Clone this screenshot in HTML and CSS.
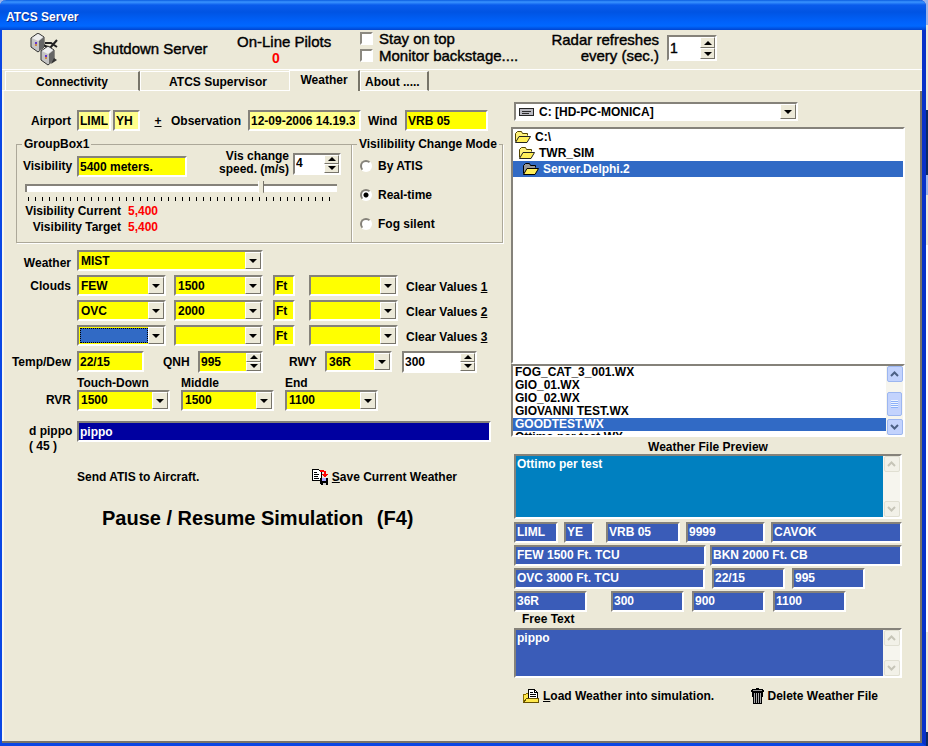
FILE: index.html
```
<!DOCTYPE html>
<html lang="en">
<head>
    <meta charset="utf-8">
    <meta name="viewport" content="width=device-width, initial-scale=1">
    <title>ATCS Server</title>
    <link rel="stylesheet" href="styles.css">
</head>
<body>
<div class="window">
    <header class="titlebar">ATCS Server</header>

    <div class="toolbar">
        <svg class="server-icon" width="32" height="34" viewBox="0 0 32 34">
            <path d="M13 12l7 3M20 15l7-8M15 10h6l6 4" fill="none" stroke="#222" stroke-width="2"/>
            <path d="M1 5l7-5 6 4v10l-6 5-7-5z" fill="#c4c4c4" stroke="#333"/>
            <path d="M2 5l6-4 5 3-5 4z" fill="#eee"/>
            <path d="M9 8l5-4v10l-5 4z" fill="#666"/>
            <path d="M11 18l7-5 6 4v10l-6 5-7-5z" fill="#c4c4c4" stroke="#333"/>
            <path d="M12 18l6-4 5 3-5 4z" fill="#eee"/>
            <path d="M19 21l5-4v10l-5 4z" fill="#666"/>
            <path d="M21 31l6-4-3-2z" fill="#333"/>
            <path d="M6 9v2M16 22v2" stroke="#63c" stroke-width="2"/>
            <path d="M6 11v2M16 24v2" stroke="#c84" stroke-width="2"/>
        </svg>
        <button class="plain shutdown">Shutdown Server</button>
        <div class="pilots">On-Line Pilots<strong>0</strong></div>
        <div class="options">
            <label><input type="checkbox"> Stay on top</label>
            <label><input type="checkbox"> Monitor backstage....</label>
        </div>
        <label class="radar" for="refresh">Radar refreshes<br>every (sec.)</label>
        <div class="spin radar-spin">
            <input id="refresh" type="number" value="1">
            <span class="updown"><button class="up" aria-label="Up"></button><button class="down" aria-label="Down"></button></span>
        </div>
    </div>

    <nav class="tabs">
        <button class="tab tab-conn">Connectivity</button>
        <button class="tab tab-sup">ATCS Supervisor</button>
        <button class="tab tab-weather active">Weather</button>
        <button class="tab tab-about">About .....</button>
    </nav>

    <main class="page">
        <section class="left">
            <div class="row row-airport">
                <label class="lbl" for="airport">Airport</label>
                <input id="airport" class="pale w34" type="text" value="LIML">
                <input class="pale w27" type="text" value="YH" aria-label="Information code">
                <button class="plain plusminus"><u>+</u></button>
                <label class="obs" for="observation">Observation</label>
                <input id="observation" class="pale w112" type="text" value="12-09-2006 14.19.35">
                <label class="wind" for="wind">Wind</label>
                <input id="wind" class="w82" type="text" value="VRB 05">
            </div>

            <div class="groups">
                <fieldset class="vis">
                    <legend>GroupBox1</legend>
                    <div class="vis-top">
                        <label class="vis-label" for="visibility">Visibility</label>
                        <input id="visibility" class="w110" type="text" value="5400 meters.">
                        <label class="speed" for="speed">Vis change<br>speed. (m/s)</label>
                        <div class="spin w48">
                            <input id="speed" type="number" value="4">
                            <span class="updown"><button class="up" aria-label="Up"></button><button class="down" aria-label="Down"></button></span>
                        </div>
                    </div>
                    <input class="slider" type="range" min="0" max="100" value="76" aria-label="Visibility">
                    <div class="ticks"></div>
                    <p class="reading"><span>Visibility Current</span> <b>5,400</b></p>
                    <p class="reading"><span>Visibility Target</span> <b>5,400</b></p>
                </fieldset>
                <fieldset class="mode">
                    <legend>Visilibility Change Mode</legend>
                    <label><input type="radio" name="mode"> By ATIS</label>
                    <label><input type="radio" name="mode" checked> Real-time</label>
                    <label><input type="radio" name="mode"> Fog silent</label>
                </fieldset>
            </div>

            <div class="row">
                <label class="lbl low" for="weather">Weather</label>
                <div class="combo w186"><select id="weather"><option>MIST</option></select></div>
            </div>
            <div class="row">
                <label class="lbl" for="cloud1">Clouds</label>
                <div class="combo w89"><select id="cloud1"><option>FEW</option></select></div>
                <div class="combo w89 after8"><select aria-label="Height 1"><option>1500</option></select></div>
                <input class="ft" type="text" value="Ft" aria-label="Unit 1">
                <div class="combo w89 after14"><select aria-label="Type 1"><option></option></select></div>
                <button class="plain clear">Clear Values <u>1</u></button>
            </div>
            <div class="row">
                <span class="lbl"></span>
                <div class="combo w89"><select aria-label="Cloud 2"><option>OVC</option></select></div>
                <div class="combo w89 after8"><select aria-label="Height 2"><option>2000</option></select></div>
                <input class="ft" type="text" value="Ft" aria-label="Unit 2">
                <div class="combo w89 after14"><select aria-label="Type 2"><option></option></select></div>
                <button class="plain clear">Clear Values <u>2</u></button>
            </div>
            <div class="row">
                <span class="lbl"></span>
                <div class="combo w89 focused"><select aria-label="Cloud 3"><option></option></select></div>
                <div class="combo w89 after8"><select aria-label="Height 3"><option></option></select></div>
                <input class="ft" type="text" value="Ft" aria-label="Unit 3">
                <div class="combo w89 after14"><select aria-label="Type 3"><option></option></select></div>
                <button class="plain clear">Clear Values <u>3</u></button>
            </div>
            <div class="row row-temp">
                <label class="lbl" for="temp">Temp/Dew</label>
                <input id="temp" class="w67" type="text" value="22/15">
                <label class="qnh" for="qnh">QNH</label>
                <div class="spin yellow w65">
                    <input id="qnh" type="number" value="995">
                    <span class="updown"><button class="up" aria-label="Up"></button><button class="down" aria-label="Down"></button></span>
                </div>
                <label class="rwy" for="rwy">RWY</label>
                <div class="combo w67"><select id="rwy"><option>36R</option></select></div>
                <div class="spin w75 after10">
                    <input type="number" value="300" aria-label="Course">
                    <span class="updown"><button class="up" aria-label="Up"></button><button class="down" aria-label="Down"></button></span>
                </div>
            </div>
            <div class="row row-rvr">
                <span class="lbl">RVR</span>
                <div class="rvr"><label for="touch">Touch-Down</label><div class="combo"><select id="touch"><option>1500</option></select></div></div>
                <div class="rvr"><label for="middle">Middle</label><div class="combo"><select id="middle"><option>1500</option></select></div></div>
                <div class="rvr"><label for="end">End</label><div class="combo"><select id="end"><option>1100</option></select></div></div>
            </div>
            <div class="row row-free">
                <label class="lbl count" for="free">d pippo<br><span>( 45 )</span></label>
                <input id="free" class="navy" type="text" value="pippo">
            </div>
            <div class="actions">
                <button class="plain">Send ATIS to Aircraft.</button>
                <button class="plain save">
                    <svg width="16" height="16" viewBox="0 0 16 16" shape-rendering="crispEdges">
                        <path d="M.5 .5h6l3 3v8h-9z" fill="#fff" stroke="#000"/>
                        <path d="M2 3.500h3M2 5.500h5M2 7.500h4M2 9.500h5" stroke="#000"/>
                        <path d="M8 1h4v1h2v3h2l-3 4-3-4h2V3H8z" fill="#f00"/>
                        <path d="M8 9h8v7H9l-1-1z" fill="#000"/>
                        <path d="M10 9h4v3h-4z" fill="#aaf"/>
                        <path d="M11 14h3v2h-3z" fill="#ccc"/>
                    </svg>
                    <span><u>S</u>ave Current Weather</span>
                </button>
            </div>
            <button class="plain pause">Pause / Resume Simulation <span>(F4)</span></button>
        </section>

        <section class="right">
            <div class="combo drive">
                <svg width="16" height="8" viewBox="0 0 16 8" shape-rendering="crispEdges">
                    <path d="M0 0h16v8H0z" fill="#222"/>
                    <path d="M1 1h14v6H1z" fill="#b8b8c0"/>
                    <path d="M3 3.500h10M3 5.500h8" stroke="#222"/>
                </svg>
                <select aria-label="Drive"><option>C: [HD-PC-MONICA]</option></select>
            </div>
            <ul class="sunken dirs" role="listbox" aria-label="Folders">
                <li role="option"><svg class="folder"><use href="#folder"/></svg>C:\</li>
                <li role="option" class="in1"><svg class="folder"><use href="#folder"/></svg>TWR_SIM</li>
                <li role="option" class="in2 selected" aria-selected="true"><svg class="folder"><use href="#folder-open"/></svg>Server.Delphi.2</li>
            </ul>
            <div class="sunken files">
                <ul role="listbox" aria-label="Weather files">
                    <li role="option">FOG_CAT_3_001.WX</li>
                    <li role="option">GIO_01.WX</li>
                    <li role="option">GIO_02.WX</li>
                    <li role="option">GIOVANNI TEST.WX</li>
                    <li role="option" class="selected" aria-selected="true">GOODTEST.WX</li>
                    <li role="option">Ottimo per test.WX</li>
                </ul>
                <div class="scrollbar">
                    <button class="arrow" aria-label="Scroll up"><svg width="9" height="6"><path d="M1 5l3.500-3.500L8 5"/></svg></button>
                    <span class="thumb"></span>
                    <button class="arrow" aria-label="Scroll down"><svg width="9" height="6"><path d="M1 1l3.500 3.500L8 1"/></svg></button>
                </div>
            </div>

            <h2>Weather File Preview</h2>
            <div class="preview">
                <div class="memo memo-note">
                    <textarea aria-label="Weather File Preview">Ottimo per test</textarea>
                    <div class="scrollbar off">
                        <button class="arrow" disabled aria-label="Scroll up"><svg width="9" height="6"><path d="M1 5l3.500-3.500L8 5"/></svg></button>
                        <button class="arrow" disabled aria-label="Scroll down"><svg width="9" height="6"><path d="M1 1l3.500 3.500L8 1"/></svg></button>
                    </div>
                </div>
                <div class="cells cells-a">
                    <input type="text" value="LIML" aria-label="Airport">
                    <input type="text" class="code" value="YE" aria-label="Code">
                    <input type="text" value="VRB 05" aria-label="Wind">
                    <input type="text" value="9999" aria-label="Visibility">
                    <input type="text" value="CAVOK" aria-label="Weather">
                </div>
                <div class="cells cells-b">
                    <input type="text" value="FEW 1500 Ft. TCU" aria-label="Cloud 1">
                    <input type="text" value="BKN 2000 Ft. CB" aria-label="Cloud 2">
                </div>
                <div class="cells cells-c">
                    <input type="text" value="OVC 3000 Ft. TCU" aria-label="Cloud 3">
                    <input type="text" value="22/15" aria-label="Temp/Dew">
                    <input type="text" value="995" aria-label="QNH">
                </div>
                <div class="cells cells-d">
                    <input type="text" class="runway" value="36R" aria-label="RWY">
                    <input type="text" value="300" aria-label="RVR touch-down">
                    <input type="text" value="900" aria-label="RVR middle">
                    <input type="text" value="1100" aria-label="RVR end">
                </div>
                <label class="free-label" for="freetext">Free Text</label>
                <div class="memo memo-free">
                    <textarea id="freetext">pippo</textarea>
                    <div class="scrollbar off">
                        <button class="arrow" disabled aria-label="Scroll up"><svg width="9" height="6"><path d="M1 5l3.500-3.500L8 5"/></svg></button>
                        <button class="arrow" disabled aria-label="Scroll down"><svg width="9" height="6"><path d="M1 1l3.500 3.500L8 1"/></svg></button>
                    </div>
                </div>
                <div class="file-actions">
                    <button class="plain">
                        <svg width="16" height="15" viewBox="0 0 16 15" shape-rendering="crispEdges">
                            <path d="M.5 13.500v-8h2l1-1h3v9z" fill="#ffe84a" stroke="#886c00"/>
                            <path d="M5.500 11V.5h6l3 3V11z" fill="#fff" stroke="#000"/>
                            <path d="M11.500 .5v3h3M7 3.500h3M7 5.500h6M7 7.500h6" fill="none" stroke="#000"/>
                            <path d="M.5 13.500l3-4h12v4z" fill="#ffe84a" stroke="#665000"/>
                        </svg>
                        <span><u>L</u>oad Weather into simulation.</span>
                    </button>
                    <button class="plain">
                        <svg width="13" height="16" viewBox="0 0 13 16" shape-rendering="crispEdges">
                            <path d="M5 0h3v1h4v1h1v2H0V2h1V1h4z" fill="#000"/>
                            <path d="M2 2h9v1H2z" fill="#999"/>
                            <path d="M1 4h11v5h-1v7H2V9H1z" fill="#000"/>
                            <path d="M3 5h1v10H3zM5 5h1v10H5zM7 5h1v10H7zM9 5h1v10H9z" fill="#aaa"/>
                        </svg>
                        <span>Delete Weather File</span>
                    </button>
                </div>
            </div>
        </section>
    </main>
</div>

<svg class="defs" width="0" height="0">
    <symbol id="folder" viewBox="0 0 16 12">
        <path d="M.5 10.500v-8l2-2h4l1 2h5v2" fill="#fff27a" stroke="#554400"/>
        <path d="M.5 11.500l3.500-6h11.500l-3.500 6z" fill="#ffee58" stroke="#222"/>
    </symbol>
    <symbol id="folder-open" viewBox="0 0 16 12">
        <path d="M.5 10.500v-8l2-2h4l1 2h5v2" fill="#999" stroke="#000"/>
        <path d="M.5 11.500l3.500-6h11.500l-3.500 6z" fill="#ffee58" stroke="#000"/>
    </symbol>
</svg>
</body>
</html>
```
FILE: styles.css
```
*, *::before, *::after {
    box-sizing: border-box;
}
body {
    margin: 0;
    padding-right: 2px;
    min-height: 100vh;
    display: flex;
    background: linear-gradient(#9ab4ea 25px, #ece9d8 25px 110px, #0a2a66 110px 175px, #9ab4ea 175px 195px, #ece9d8 195px 245px, #fff 245px 632px, #ece9d8 632px 732px, #0a2a66 732px);
    font: bold 12px/14px "Liberation Sans", Arial, sans-serif;
    color: #000;
}
input, select, textarea, button {
    font: inherit;
    color: inherit;
    margin: 0;
    border-radius: 0;
}
.defs {
    position: absolute;
}
.window {
    flex: 1;
    min-width: 0;
    display: flex;
    flex-direction: column;
    background: #ece9d8;
    border: solid #0a46e4;
    border-width: 0 4px 3px 2px;
    border-right-color: #0831c8;
    border-radius: 6px 6px 0 0;
}
.titlebar {
    height: 30px;
    margin: 0 -4px 0 -2px;
    padding: 10px 6px 0;
    border-radius: 6px 6px 0 0;
    background: linear-gradient(#0a5ce0, #3a94ff 2px, #0a5cec 5px, #0054e3 12px, #0062fb 22px, #0068ff 26px, #0044d0);
    color: #fff;
    text-shadow: 1px 1px #0a2a90;
}
.plain {
    border: 0;
    padding: 0;
    background: none;
    white-space: nowrap;
}

/* top bar */
.toolbar {
    display: flex;
    align-items: flex-start;
    height: 39px;
    font-size: 15px;
    line-height: 16px;
    font-weight: normal;
    -webkit-text-stroke: 0.4px;
    white-space: nowrap;
}
.server-icon {
    margin: 3px 0 0 28px;
}
.shutdown {
    margin: 11px 0 0 29px;
    width: 118px;
}
.pilots {
    margin: 4px 0 0 28px;
    width: 96px;
}
.pilots strong {
    display: block;
    color: #f00;
    font-size: 14px;
    padding-left: 35px;
    -webkit-text-stroke: 0;
}
.options {
    margin: 0 0 0 27px;
    width: 162px;
}
.options label {
    display: flex;
    align-items: center;
    gap: 6px;
    height: 17px;
    line-height: 15px;
}
.options input {
    appearance: none;
    width: 13px;
    height: 13px;
    background: #fff;
    border: 2px solid;
    border-color: #8c8980 #fff #fff #8c8980;
}
.radar {
    margin: 2px 8px 0 0;
    width: 137px;
    text-align: right;
}
.radar-spin {
    width: 50px;
    margin-top: 5px;
}

/* tabs */
.tabs {
    display: flex;
    align-items: flex-end;
    height: 22px;
    padding-left: 3px;
    border-top: 1px solid #fff;
    box-shadow: inset 0 -1px #fff;
}
.tab {
    height: 20px;
    padding: 2px 0 0;
    border: 1px solid #fff;
    border-right: 2px solid #777468;
    background: #ece9d8;
    white-space: nowrap;
}
.tab-conn {
    width: 135px;
}
.tab-sup {
    width: 149px;
    padding-left: 6px;
    border-right: 0;
}
.tab-weather {
    width: 71px;
    height: 21px;
    padding-bottom: 5px;
    border-bottom: 0;
}
.tab-about {
    width: 69px;
    padding-left: 4px;
    text-align: left;
}

/* fields */
input[type=text], .spin, .combo, .sunken, .memo {
    border: 2px solid;
    border-color: #85827a #fff #fff #85827a;
}
input[type=text] {
    height: 21px;
    padding: 0 1px;
    background: #ff0;
    min-width: 0;
    outline: 0;
}
input.pale {
    background: #ffff8c;
}
input.navy {
    flex: 1;
    margin-right: 12px;
    background: #0000a0;
    color: #fff;
}
.w27 { width: 27px; margin-left: 2px; }
.w34 { width: 34px; }
.w48 { width: 48px; }
.w65 { width: 65px; }
.w67 { width: 67px; }
.w75 { width: 75px; }
.w82 { width: 83px; }
.w89 { width: 89px; }
.w110 { width: 110px; }
.w112 { width: 113px; }
.w186 { width: 186px; }
.after8 { margin-left: 8px; }
.after10 { margin-left: 10px; }
.after14 { margin-left: 14px; }

#observation {
    padding-right: 4px;
}
.combo {
    position: relative;
    height: 21px;
    background: #ff0;
}
.combo select {
    appearance: none;
    width: 100%;
    height: 17px;
    padding: 0 18px 0 2px;
    border: 0;
    background: none;
    outline: 0;
    display: block;
}
.combo::before {
    content: "";
    position: absolute;
    right: 0;
    top: 0;
    width: 16px;
    height: 17px;
    background: #ece9d8;
    border: 1px solid;
    border-color: #fff #77746a #77746a #fff;
    pointer-events: none;
}
.combo::after {
    content: "";
    position: absolute;
    right: 4px;
    top: 7px;
    border: 4px solid transparent;
    border-top-color: #000;
    border-bottom: 0;
    pointer-events: none;
}
.focused select {
    width: 68px;
    height: 15px;
    margin: 1px;
    background: #316ac5;
    border: 1px dotted #000;
}
.spin {
    display: flex;
    height: 22px;
    background: #fff;
}
.spin.yellow {
    background: #ff0;
}
.spin input {
    appearance: textfield;
    flex: 1;
    min-width: 0;
    padding: 0 1px;
    border: 0;
    background: none;
    outline: 0;
}
.spin input::-webkit-inner-spin-button {
    display: none;
}
.updown {
    display: flex;
    flex-direction: column;
    width: 15px;
}
.updown button {
    flex: 1;
    padding: 0;
    border: 1px solid;
    border-color: #fff #77746a #77746a #fff;
    background: #ece9d8;
    display: flex;
    align-items: center;
    justify-content: center;
}
.updown button::after {
    content: "";
    border: 4px solid transparent;
}
.updown .up::after {
    border-top: 0;
    border-bottom-color: #000;
}
.updown .down::after {
    border-bottom: 0;
    border-top-color: #000;
}
.radar-spin {
    height: 26px;
    font-size: 14px;
}
.radar-spin input {
    align-self: center;
}

/* weather page */
.page {
    flex: 1;
    display: grid;
    grid-template-columns: 501px minmax(0, 1fr);
    gap: 8px;
    padding: 11px 15px 20px 0;
    border: solid #77746a;
    border-width: 0 2px 2px 0;
    box-shadow: inset 2px 0 #f8f7f0;
}
.left {
    padding: 8px 0 0 6px;
}
.row {
    display: flex;
    align-items: center;
    height: 21px;
    margin-bottom: 4px;
    white-space: nowrap;
}
.lbl {
    width: 63px;
    margin-right: 6px;
    display: flex;
    justify-content: flex-end;
}
.low {
    padding-top: 4px;
}
.plusminus {
    width: 10px;
    margin-left: 13px;
}
.obs {
    margin-left: 8px;
    width: 77px;
}
.wind {
    width: 37px;
    margin-left: 7px;
}
.groups {
    display: flex;
    margin: 6px 0 7px 8px;
    height: 106px;
}
fieldset {
    margin: 0;
    padding: 0;
    min-width: 0;
    border: 1px solid #aca899;
    box-shadow: 1px 1px #fff;
}
legend {
    margin-left: 5px;
    padding: 0 2px;
}
.vis {
    width: 336px;
}
.mode {
    flex: 1;
    border-left: 0;
}
.vis-top {
    display: flex;
    align-items: center;
    height: 28px;
    padding-top: 3px;
    line-height: 13px;
}
.vis-label {
    width: 60px;
    padding-left: 6px;
}
.speed {
    width: 102px;
    margin-right: 4px;
    padding-bottom: 8px;
    text-align: right;
}
.vis-top .spin {
    margin-bottom: 6px;
}
.slider {
    appearance: none;
    display: block;
    width: 312px;
    height: 16px;
    margin: 1px 0 0 8px;
    background: none;
}
.slider::-webkit-slider-runnable-track {
    height: 8px;
    background: #fff;
    border: solid #85827a;
    border-width: 2px 0 0 2px;
}
.slider::-webkit-slider-thumb {
    appearance: none;
    width: 6px;
    height: 14px;
    margin-top: -5px;
    background: linear-gradient(90deg, #fff 1px, #ece9d8 1px 5px, #77746a 5px);
    clip-path: polygon(0 0, 100% 0, 100% 80%, 50% 100%, 0 80%);
}
.ticks {
    width: 306px;
    height: 4px;
    margin: 1px 0 0 11px;
    background: repeating-linear-gradient(90deg, #000 0 1px, transparent 1px 7px);
}
.reading {
    display: flex;
    gap: 7px;
    margin: 4px 0;
    line-height: 12px;
}
.reading span {
    width: 104px;
    text-align: right;
}
.reading b {
    color: #f00;
}
.mode label {
    display: flex;
    align-items: center;
    gap: 6px;
    height: 29px;
    margin: 0 0 0 8px;
}
.mode input {
    appearance: none;
    width: 12px;
    height: 12px;
    border: 2px solid;
    border-color: #85827a #fff #fff #85827a;
    border-radius: 50%;
    background: #fff;
}
.mode input:checked {
    background: radial-gradient(#000 2px, #fff 3px);
}
input.ft {
    width: 22px;
    margin-left: 10px;
}
.clear {
    margin-left: 8px;
    padding-top: 3px;
}
.row-temp {
    margin-top: 5px;
}
.qnh {
    width: 28px;
    margin: 0 7px 0 19px;
}
.rwy {
    width: 29px;
    margin: 0 7px 0 26px;
}
.row-rvr {
    height: 35px;
    margin-bottom: 10px;
    align-items: flex-end;
}
.row-rvr .lbl {
    padding-bottom: 4px;
}
.rvr {
    width: 93px;
    margin-right: 11px;
    line-height: 13px;
}
.row-free {
    height: 30px;
    align-items: flex-start;
}
.count {
    display: block;
    padding: 3px 0 0 21px;
    line-height: 15px;
}
.actions {
    display: flex;
    justify-content: space-between;
    margin: 18px 46px 0 69px;
}
.actions .plain, .file-actions .plain {
    display: flex;
    align-items: center;
    gap: 4px;
}
.pause {
    margin: 22px 0 0 94px;
    font-size: 20px;
    line-height: 22px;
}
.pause span {
    margin-left: 8px;
}

/* file pickers */
.drive {
    display: flex;
    align-items: center;
    width: 284px;
    height: 19px;
    margin-left: 3px;
    padding-left: 3px;
    background: #fff;
}
.drive select {
    padding-left: 5px;
    height: 15px;
}
.drive::before {
    height: 15px;
}
.drive::after {
    top: 6px;
}
ul {
    list-style: none;
    margin: 0;
    padding: 0;
}
.sunken {
    background: #fff;
}
.dirs {
    height: 237px;
    margin-top: 6px;
}
.dirs li {
    display: flex;
    align-items: center;
    gap: 4px;
    height: 16px;
    padding-left: 2px;
}
.dirs .in1 {
    padding-left: 6px;
}
.dirs .in2 {
    padding-left: 10px;
}
.selected {
    background: #316ac5;
    color: #fff;
}
.folder {
    width: 16px;
    height: 12px;
}
.files {
    display: flex;
    height: 73px;
    overflow: hidden;
}
.files ul {
    flex: 1;
    overflow: hidden;
}
.files li {
    height: 13px;
    line-height: 13px;
    padding-left: 2px;
}
.scrollbar {
    display: flex;
    flex-direction: column;
    justify-content: space-between;
    align-items: center;
    width: 17px;
    background: #f6f5ee;
}
.arrow {
    width: 16px;
    height: 16px;
    padding: 0;
    display: flex;
    align-items: center;
    justify-content: center;
    border: 1px solid #9cb6f0;
    border-radius: 2px;
    background: #c3d3fd;
}
.arrow path {
    fill: none;
    stroke: #4d6185;
    stroke-width: 2;
}
.thumb {
    width: 15px;
    height: 24px;
    border: 1px solid #9cb6f0;
    border-radius: 2px;
    background: repeating-linear-gradient(#eef4fe 0 1px, #8cb0f8 1px 2px) center / 7px 8px no-repeat #c3d3fd;
    margin-top: 6px;
}
.off .arrow {
    border-color: #e0dfd2;
    background: #f2f1e8;
}
.off path {
    stroke: #c6c5b8;
}
h2 {
    margin: 4px 0 0;
    font-size: 12px;
    line-height: 13px;
    text-align: center;
}
.preview {
    margin: 0 3px;
}
.memo {
    display: flex;
    color: #fff;
}
.memo textarea {
    flex: 1;
    min-width: 0;
    border: 0;
    padding: 1px;
    background: none;
    resize: none;
    outline: 0;
}
.memo-note {
    height: 65px;
    background: #0080c0;
}
.memo-free {
    height: 50px;
    background: #3a5cb8;
}
.cells {
    display: grid;
    margin-top: 2px;
}
.cells input[type=text] {
    width: 100%;
    padding-bottom: 1px;
    background: #3a5cb8;
    color: #fff;
}
.cells-a {
    grid-template-columns: 44px 36px 74px 79px 1fr;
    column-gap: 6px;
    margin-top: 3px;
}
.cells input.code {
    width: 30px;
}
.cells-b {
    grid-template-columns: 1fr 1fr;
    column-gap: 4px;
}
.cells-c {
    grid-template-columns: 191px 73px 73px;
    column-gap: 7px;
}
.cells-d {
    grid-template-columns: 89px 73px 73px 73px;
    column-gap: 8px;
}
.cells input.runway {
    width: 73px;
}
.free-label {
    display: block;
    margin: 0 0 2px 8px;
}
.file-actions {
    display: flex;
    justify-content: space-between;
    margin: 10px 24px 0 9px;
}
```
